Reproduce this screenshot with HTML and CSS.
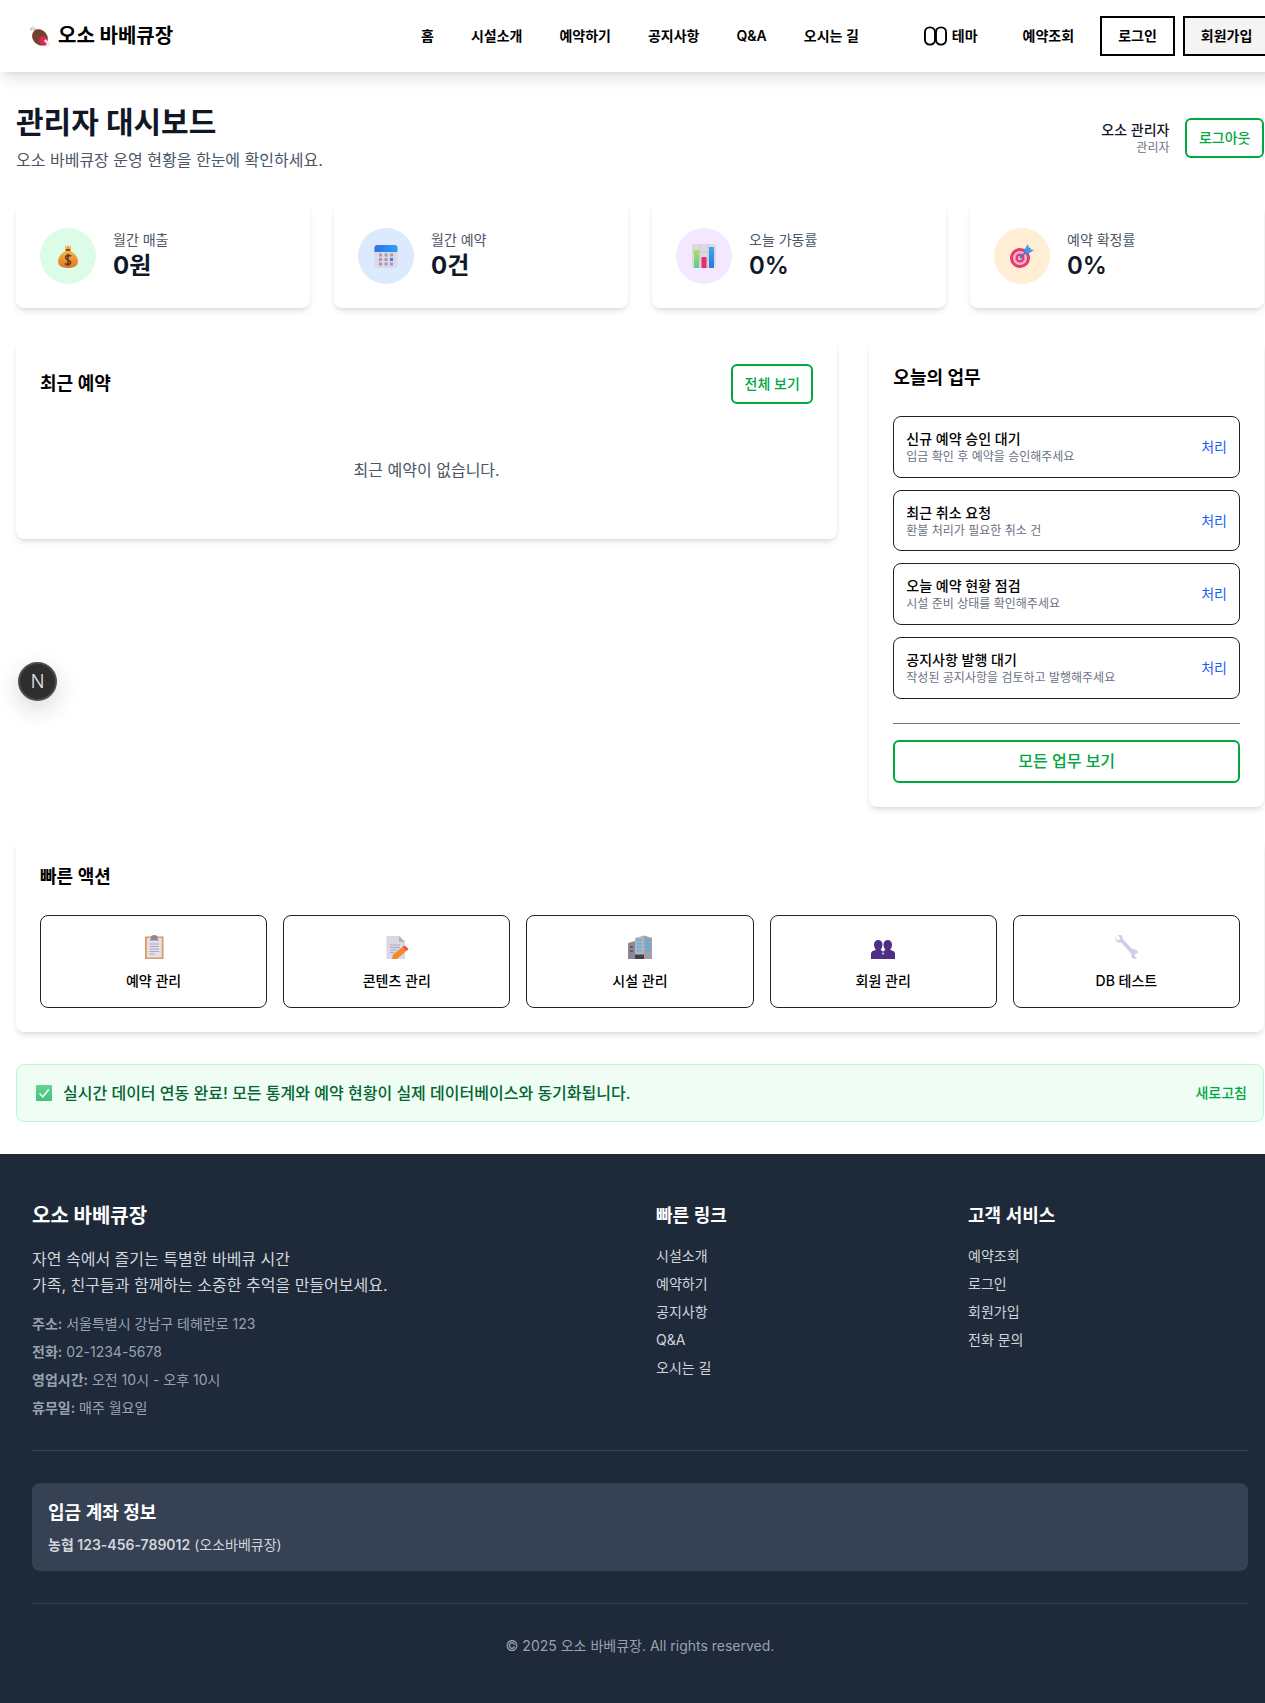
FILE: index.html
```html
<!DOCTYPE html>
<html lang="ko">
<head>
<meta charset="utf-8">
<title>오소 바베큐장 관리자 대시보드</title>
<link rel="stylesheet" href="styles.css">
</head>
<body>
<div class="page">
  <header class="site-header">
    <a class="logo">
      <svg class="logo-icon" viewBox="0 0 24 24" aria-hidden="true">
        <rect x="2.500" y="2.500" width="8" height="3" rx="1.200" fill="#d9cfcb" transform="rotate(45 6.500 4)"/>
        <circle cx="2.800" cy="3.600" r="1.600" fill="#c9bdb9"/>
        <circle cx="4.400" cy="2" r="1.600" fill="#e9e2df"/>
        <ellipse cx="12.500" cy="13" rx="10" ry="8.300" fill="#75402f" transform="rotate(50 12.500 13)"/>
        <ellipse cx="16.500" cy="17" rx="4.600" ry="5.600" fill="#d92a57" transform="rotate(-20 16.500 17)"/>
        <rect x="17" y="16.500" width="6.500" height="3" rx="1.200" fill="#efe7e4" transform="rotate(45 20 18)"/>
        <circle cx="23" cy="19.800" r="1.500" fill="#efe7e4"/>
        <circle cx="21" cy="22.300" r="1.500" fill="#efe7e4"/>
      </svg>
      <span>오소 바베큐장</span>
    </a>
    <nav class="main-nav">
      <a>홈</a><a>시설소개</a><a>예약하기</a><a>공지사항</a><a>Q&amp;A</a><a>오시는 길</a>
    </nav>
    <div class="header-actions">
      <a class="theme-toggle">
        <svg class="theme-icon" viewBox="0 0 24 20" aria-hidden="true">
          <rect x="1" y="1" width="10.500" height="18" rx="5" fill="none" stroke="#000" stroke-width="2"/>
          <rect x="12.500" y="1" width="10.500" height="18" rx="5" fill="none" stroke="#000" stroke-width="2"/>
        </svg>
        <span>테마</span>
      </a>
      <a class="lookup">예약조회</a>
      <a class="box-btn">로그인</a>
      <a class="box-btn box-btn-filled">회원가입</a>
    </div>
  </header>

  <main class="dashboard">
    <section class="page-head">
      <div>
        <h1 class="page-title">관리자 대시보드</h1>
        <p class="page-sub">오소 바베큐장 운영 현황을 한눈에 확인하세요.</p>
      </div>
      <div class="user-area">
        <div class="user-info">
          <p class="user-name">오소 관리자</p>
          <p class="user-role">관리자</p>
        </div>
        <a class="outline-btn">로그아웃</a>
      </div>
    </section>

    <section class="stats">
      <article class="card stat-card">
        <div class="stat-circle circle-green">
          <svg class="emoji-24" viewBox="0 0 24 24" aria-hidden="true">
            <defs><linearGradient id="bag" x1="0" y1="0" x2="0" y2="1"><stop offset="0" stop-color="#f7b23b"/><stop offset="1" stop-color="#d9792a"/></linearGradient></defs>
            <path d="M9 1.500L10.500 3L12 1L13.500 3L15 1.500L14.500 5.500H9.500Z" fill="#f2a93b"/>
            <rect x="9.600" y="5" width="4.800" height="2.600" fill="#8a4b22"/>
            <path d="M9.500 7C5.500 9 2 13 2 17.500C2 22 6.500 24 12 24C17.500 24 22 22 22 17.500C22 13 18.500 9 14.500 7Z" fill="url(#bag)"/>
            <path d="M15 12.200C14 11 10 10.800 9.600 13.400C9.300 16.500 14.800 15.600 14.600 18.600C14.300 21 10 20.800 9 19.400M12 9.800V22" fill="none" stroke="#6e3a24" stroke-width="1.700"/>
          </svg>
        </div>
        <div class="stat-text"><p class="stat-label">월간 매출</p><p class="stat-value">0원</p></div>
      </article>
      <article class="card stat-card">
        <div class="stat-circle circle-blue">
          <svg class="emoji-24" viewBox="0 0 24 24" aria-hidden="true">
            <defs><linearGradient id="calTop" x1="0" y1="0" x2="1" y2="0"><stop offset="0" stop-color="#2f6fe8"/><stop offset="1" stop-color="#2aa2f5"/></linearGradient></defs>
            <rect x="0.500" y="1" width="23" height="23" rx="3" fill="#e0d6ea"/>
            <path d="M0.500 8V4A3 3 0 0 1 3.500 1H20.500A3 3 0 0 1 23.500 4V8Z" fill="url(#calTop)"/>
            <g fill="#a49bb0">
              <rect x="5" y="9.500" width="3" height="3"/><rect x="10.500" y="9.500" width="3" height="3"/><rect x="16" y="9.500" width="3" height="3"/>
              <rect x="5" y="14" width="3" height="3"/><rect x="10.500" y="14" width="3" height="3"/>
              <rect x="5" y="18.500" width="3" height="3"/><rect x="10.500" y="18.500" width="3" height="3"/><rect x="16" y="18.500" width="3" height="3"/>
            </g>
            <rect x="16" y="14" width="3" height="3" fill="#2a8cf2"/>
          </svg>
        </div>
        <div class="stat-text"><p class="stat-label">월간 예약</p><p class="stat-value">0건</p></div>
      </article>
      <article class="card stat-card">
        <div class="stat-circle circle-purple">
          <svg class="emoji-24" viewBox="0 0 24 24" aria-hidden="true">
            <defs>
              <linearGradient id="barG" x1="0" y1="0" x2="0" y2="1"><stop offset="0" stop-color="#a7e05f"/><stop offset="1" stop-color="#58d08a"/></linearGradient>
              <linearGradient id="barB" x1="0" y1="0" x2="0" y2="1"><stop offset="0" stop-color="#35a8f0"/><stop offset="1" stop-color="#2a7ad8"/></linearGradient>
            </defs>
            <rect x="0" y="0" width="24" height="24" rx="3" fill="#ddd8e2"/>
            <path d="M8 0V24M16 0V24M0 8H24M0 16H24" stroke="#c2bcc9" stroke-width="0.600"/>
            <rect x="2" y="6" width="5" height="18" fill="url(#barG)"/>
            <rect x="9.500" y="13" width="5" height="11" fill="#e82c75"/>
            <rect x="17" y="3" width="5" height="21" fill="url(#barB)"/>
          </svg>
        </div>
        <div class="stat-text"><p class="stat-label">오늘 가동률</p><p class="stat-value stat-thin">0%</p></div>
      </article>
      <article class="card stat-card">
        <div class="stat-circle circle-orange">
          <svg class="emoji-24" viewBox="0 0 24 24" aria-hidden="true">
            <circle cx="10" cy="14" r="10" fill="#e53a6b"/>
            <circle cx="10" cy="14" r="7" fill="#eeb4cf"/>
            <circle cx="10" cy="14" r="4.500" fill="#e53a6b"/>
            <circle cx="10" cy="14" r="2.200" fill="#eeb4cf"/>
            <path d="M10 14L20 4" stroke="#2f7fd8" stroke-width="1.800"/>
            <path d="M14 6L18 0L19 5L24 6L18 10Z" fill="#3d9cf0"/>
          </svg>
        </div>
        <div class="stat-text"><p class="stat-label">예약 확정률</p><p class="stat-value stat-thin">0%</p></div>
      </article>
    </section>

    <section class="panels">
      <article class="card recent">
        <div class="recent-head">
          <h2 class="section-title">최근 예약</h2>
          <a class="outline-btn">전체 보기</a>
        </div>
        <p class="recent-empty">최근 예약이 없습니다.</p>
      </article>
      <aside class="card tasks">
        <h2 class="section-title tasks-title">오늘의 업무</h2>
        <ul class="task-list">
          <li class="task"><div><p class="task-name">신규 예약 승인 대기</p><p class="task-desc">입금 확인 후 예약을 승인해주세요</p></div><a class="task-link">처리</a></li>
          <li class="task"><div><p class="task-name">최근 취소 요청</p><p class="task-desc">환불 처리가 필요한 취소 건</p></div><a class="task-link">처리</a></li>
          <li class="task"><div><p class="task-name">오늘 예약 현황 점검</p><p class="task-desc">시설 준비 상태를 확인해주세요</p></div><a class="task-link">처리</a></li>
          <li class="task"><div><p class="task-name">공지사항 발행 대기</p><p class="task-desc">작성된 공지사항을 검토하고 발행해주세요</p></div><a class="task-link">처리</a></li>
        </ul>
        <div class="tasks-foot"><a class="wide-btn">모든 업무 보기</a></div>
      </aside>
    </section>

    <section class="card quick">
      <h2 class="section-title quick-title">빠른 액션</h2>
      <div class="quick-grid">
        <a class="quick-item">
          <span class="quick-icon"><svg class="emoji-24" viewBox="0 0 24 24" aria-hidden="true">
            <rect x="3" y="1.500" width="18.500" height="22.500" fill="#d99a5f"/>
            <rect x="4.800" y="3" width="15" height="19.500" fill="#e6deec"/>
            <path d="M9 3.500V2A3 1.800 0 0 1 15.500 2V3.500L17 5.500H7.500Z" fill="#8f8896"/>
            <path d="M7.500 9H17M7.500 11.500H17M7.500 14H17M7.500 16.500H17M7.500 19H13" stroke="#a9a2b2" stroke-width="0.900"/>
          </svg></span>
          <span class="quick-label">예약 관리</span>
        </a>
        <a class="quick-item">
          <span class="quick-icon"><svg class="emoji-24" viewBox="0 0 24 24" aria-hidden="true">
            <path d="M1.500 1H14L20 7V24H1.500Z" fill="#ddd6e6"/>
            <path d="M14 1L20 7H14Z" fill="#b7aec4"/>
            <path d="M5 10H15M5 12.500H15M5 15H12M5 17.500H9" stroke="#a9a2b2" stroke-width="0.900"/>
            <path d="M19.500 10.500L23.500 14L12 24L7 24.500L8 19.500Z" fill="#f08a2c"/>
            <path d="M19.500 10.500L23.500 14L21.500 16L17.500 12.500Z" fill="#ef5350"/>
          </svg></span>
          <span class="quick-label">콘텐츠 관리</span>
        </a>
        <a class="quick-item">
          <span class="quick-icon"><svg class="emoji-24" viewBox="0 0 24 24" aria-hidden="true">
            <path d="M0 8L7 6V24H0Z" fill="#8d8795"/>
            <path d="M7 3L16 0.500V24H7Z" fill="#b6b0bf"/>
            <path d="M16 0.500L24 3V24H16Z" fill="#a39dad"/>
            <path d="M9 5H14M9 8.500H14M9 12H14M9 15.500H14M18 5.500H22.500M18 9H22.500M18 12.500H22.500M18 16H22.500" stroke="#35bdf2" stroke-width="2" stroke-dasharray="1.800 0.700"/>
            <rect x="2" y="11" width="3" height="2" fill="#5e5a66"/><rect x="2" y="15" width="3" height="2" fill="#5e5a66"/>
            <rect x="7" y="19.500" width="9" height="4.500" fill="#43404a"/>
          </svg></span>
          <span class="quick-label">시설 관리</span>
        </a>
        <a class="quick-item">
          <span class="quick-icon"><svg class="emoji-24" viewBox="0 0 24 24" aria-hidden="true">
            <g fill="#4f2f86">
              <path d="M3 9.500C3 6.500 5 5 7.200 5C9.500 5 11.500 6.500 11.500 9.500C11.500 12 10.500 14 9.500 15C11 15.500 12.500 16.500 12.500 18.500V24H0V18.500C0 16.500 2 15.500 5 15C4 14 3 12 3 9.500Z"/>
              <path d="M12.500 9.500C12.500 6.500 14.500 5 16.800 5C19 5 21 6.500 21 9.500C21 12 20 14 19 15C22 15.500 24 16.500 24 18.500V24H11.500V18.500C11.500 16.500 13 15.500 14.500 15C13.500 14 12.500 12 12.500 9.500Z"/>
            </g>
            <path d="M12 17V20M10.700 18.500H13.300" stroke="#d7c9ec" stroke-width="0.700"/>
          </svg></span>
          <span class="quick-label">회원 관리</span>
        </a>
        <a class="quick-item">
          <span class="quick-icon"><svg class="emoji-24" viewBox="0 0 24 24" aria-hidden="true">
            <path d="M2 1C1 3 1 5.500 3 7C4.500 8 6 7.800 7 7.500L17.500 19C17 20.500 17.300 22.500 19 23.500C20.500 24.300 22 24 23 23.500L20.500 21L21.500 18.500L24 18.500C24 17 23.500 15.500 22 14.700C20.800 14 19.500 14 18.500 14.500L8.500 3.500C9 2 8.500 0.800 7 0C5.800 -0.400 5 -0.200 4 0.200L6 3L5 5.500L2.500 5Z" fill="#d5cde6"/>
          </svg></span>
          <span class="quick-label">DB 테스트</span>
        </a>
      </div>
    </section>

    <section class="sync-banner">
      <svg class="sync-icon" viewBox="0 0 16 16" aria-hidden="true">
        <defs><linearGradient id="chk" x1="0" y1="0" x2="0" y2="1"><stop offset="0" stop-color="#63d68f"/><stop offset="1" stop-color="#3fc07f"/></linearGradient></defs>
        <rect width="16" height="16" rx="1" fill="url(#chk)"/>
        <path d="M3.500 8.500L6.800 11.800L12.800 4.500" fill="none" stroke="#f2fbf5" stroke-width="1.600"/>
      </svg>
      <p class="sync-text">실시간 데이터 연동 완료! 모든 통계와 예약 현황이 실제 데이터베이스와 동기화됩니다.</p>
      <a class="sync-refresh">새로고침</a>
    </section>
  </main>

  <footer class="site-footer">
    <div class="footer-grid">
      <div class="footer-brand">
        <h3 class="brand-title">오소 바베큐장</h3>
        <p class="brand-copy">자연 속에서 즐기는 특별한 바베큐 시간<br>가족, 친구들과 함께하는 소중한 추억을 만들어보세요.</p>
        <ul class="contact">
          <li><strong>주소:</strong> 서울특별시 강남구 테헤란로 123</li>
          <li><strong>전화:</strong> 02-1234-5678</li>
          <li><strong>영업시간:</strong> 오전 10시 - 오후 10시</li>
          <li><strong>휴무일:</strong> 매주 월요일</li>
        </ul>
      </div>
      <div>
        <h4 class="footer-heading">빠른 링크</h4>
        <ul class="footer-links"><li>시설소개</li><li>예약하기</li><li>공지사항</li><li>Q&amp;A</li><li>오시는 길</li></ul>
      </div>
      <div>
        <h4 class="footer-heading">고객 서비스</h4>
        <ul class="footer-links"><li>예약조회</li><li>로그인</li><li>회원가입</li><li>전화 문의</li></ul>
      </div>
    </div>
    <div class="account-wrap">
      <div class="account">
        <h4 class="footer-heading account-title">입금 계좌 정보</h4>
        <p class="account-text"><strong>농협 123-456-789012</strong> (오소바베큐장)</p>
      </div>
    </div>
    <p class="copyright">© 2025 오소 바베큐장. All rights reserved.</p>
  </footer>

  <button class="dev-badge" type="button">N</button>
</div>
</body>
</html>
```

FILE: styles.css
```css
* { box-sizing: border-box; margin: 0; padding: 0; }
html, body { overflow-x: hidden; }
body {
  background: #fff;
  color: #000;
  font-family: Inter, "Noto Sans CJK KR", sans-serif;
  font-size: 16px;
  line-height: 24px;
}
ul { list-style: none; }
.page { position: relative; width: 1280px; }

/* header */
.site-header {
  display: flex;
  align-items: center;
  height: 72px;
  padding-left: 29px;
  background: #fff;
  box-shadow: 0 10px 15px -3px rgba(0,0,0,.1), 0 4px 6px -4px rgba(0,0,0,.1);
  position: relative;
}
.logo { display: flex; align-items: center; gap: 8px; width: 144px; font-size: 20px; font-weight: 700; line-height: 28px; white-space: nowrap; }
.logo-icon { width: 21px; height: 21px; flex: none; }
.main-nav { display: flex; gap: 37px; margin-left: 248px; font-size: 14px; font-weight: 600; line-height: 20px; white-space: nowrap; }
.header-actions { display: flex; align-items: center; margin-left: 65px; font-size: 14px; font-weight: 600; line-height: 20px; white-space: nowrap; }
.theme-toggle { display: flex; align-items: center; gap: 5px; }
.theme-icon { width: 23px; height: 20px; flex: none; }
.lookup { margin-left: 45px; margin-right: 26px; }
.box-btn { display: block; padding: 8px 16px; border: 2px solid #000; height: 40px; line-height: 20px; }
.box-btn-filled { margin-left: 8px; background: #f4f4f4; }

/* main */
.dashboard { padding: 32px 16px; }
.page-head { display: flex; justify-content: space-between; align-items: center; margin-bottom: 32px; }
.page-title { font-size: 30px; line-height: 36px; font-weight: 700; color: #101828; margin-bottom: 8px; }
.page-sub { color: #4a5565; }
.user-area { display: flex; align-items: center; gap: 16px; }
.user-info { text-align: right; }
.user-name { font-size: 14px; line-height: 20px; font-weight: 500; color: #101828; }
.user-role { font-size: 12px; line-height: 16px; color: #6a7282; }
.outline-btn { display: block; padding: 8px 11.500px; border: 2px solid #00a63e; border-radius: 6px; color: #00a63e; font-size: 14px; line-height: 20px; font-weight: 500; white-space: nowrap; }

.card { background: #fff; border-radius: 8px; box-shadow: 0 4px 6px -1px rgba(0,0,0,.1), 0 2px 4px -2px rgba(0,0,0,.1); }

.stats { display: grid; grid-template-columns: repeat(4, 1fr); gap: 24px; margin-bottom: 32px; }
.stat-card { display: flex; align-items: center; gap: 17px; padding: 24px; }
.stat-circle { width: 56px; height: 56px; border-radius: 50%; display: flex; align-items: center; justify-content: center; flex: none; }
.circle-green { background: #dcfce7; }
.circle-blue { background: #dbeafe; }
.circle-purple { background: #f3e8ff; }
.circle-orange { background: #ffedd4; }
.emoji-24 { width: 24px; height: 24px; display: block; }
.stat-label { font-size: 14px; line-height: 20px; color: #4a5565; }
.stat-value { font-size: 24px; line-height: 32px; font-weight: 700; color: #101828; }
.stat-thin { font-weight: 600; }

.panels { display: grid; grid-template-columns: repeat(3, 1fr); gap: 32px; margin-bottom: 32px; align-items: start; }
.recent { grid-column: span 2; padding: 24px; height: 198.600px; }
.recent-head { display: flex; justify-content: space-between; align-items: center; }
.section-title { font-size: 18px; line-height: 28px; font-weight: 600; color: #000; }
.recent-empty { text-align: center; color: #4a5565; padding-top: 54px; }

.tasks { padding: 24px; }
.tasks-title { margin-bottom: 24px; }
.task-list { display: flex; flex-direction: column; gap: 12px; }
.task { display: flex; justify-content: space-between; align-items: center; padding: 12px; border: 1px solid #222; border-radius: 8px; }
.task-name { font-size: 14px; line-height: 20px; font-weight: 500; color: #000; }
.task-desc { font-size: 12px; line-height: 15.670px; color: #6a7282; }
.task-link { font-size: 14px; line-height: 20px; color: #155dfc; }
.tasks-foot { margin-top: 24px; padding-top: 16px; border-top: 1px solid #777; }
.wide-btn { display: block; height: 43px; border: 2px solid #00a63e; border-radius: 6px; color: #00a63e; font-weight: 500; line-height: 39px; text-align: center; }

.quick { padding: 24px; margin-bottom: 32px; }
.quick-title { margin-bottom: 24px; }
.quick-grid { display: grid; grid-template-columns: repeat(5, 1fr); gap: 16px; }
.quick-item { display: flex; flex-direction: column; align-items: center; height: 93px; padding: 16px; border: 1px solid #222; border-radius: 8px; }
.quick-icon { display: flex; align-items: center; justify-content: center; height: 31px; margin-bottom: 8px; }
.quick-label { font-size: 14px; line-height: 20px; font-weight: 500; color: #000; }

.sync-banner { display: flex; align-items: center; padding: 16px; border: 1px solid #b9f8cf; border-radius: 8px; background: #f0fdf4; }
.sync-icon { width: 16px; height: 16px; margin-left: 3px; margin-right: 11px; flex: none; }
.sync-text { flex: 1; color: #016630; font-weight: 500; }
.sync-refresh { color: #00a63e; font-size: 14px; font-weight: 500; line-height: 20px; }

/* footer */
.site-footer { background: #1e2939; color: #fff; padding: 48px 32px 47px; }
.footer-grid { display: grid; grid-template-columns: repeat(4, 1fr); gap: 32px; }
.footer-brand { grid-column: span 2; }
.brand-title { font-size: 20px; line-height: 28px; font-weight: 700; margin-bottom: 16px; }
.brand-copy { color: #d1d5dc; line-height: 26px; margin-bottom: 16px; }
.contact { display: flex; flex-direction: column; gap: 8px; color: #99a1af; font-size: 14px; line-height: 20px; }
.contact strong { font-weight: 600; }
.footer-heading { font-size: 18px; line-height: 28px; font-weight: 600; margin-bottom: 16px; }
.footer-links { display: flex; flex-direction: column; gap: 8px; color: #d1d5dc; font-size: 14px; line-height: 20px; }
.account-wrap { margin-top: 32px; padding-top: 32px; border-top: 1px solid #364153; }
.account { padding: 16px; border-radius: 8px; background: #364153; }
.account-title { margin-bottom: 8px; }
.account-text { color: #d1d5dc; font-size: 14px; line-height: 20px; }
.account-text strong { font-weight: 600; }
.copyright { margin-top: 32px; padding-top: 32px; border-top: 1px solid #364153; color: #99a1af; font-size: 14px; line-height: 20px; text-align: center; }

.dev-badge {
  position: absolute;
  left: 18px;
  top: 662px;
  width: 39px;
  height: 39px;
  border-radius: 50%;
  border: 2px solid #4d4d4d;
  background: #2e2e2e;
  color: #e8e8e8;
  font-family: Inter, sans-serif;
  font-size: 18px;
  font-weight: 300;
  box-shadow: 0 8px 24px rgba(0,0,0,.16);
}
```
